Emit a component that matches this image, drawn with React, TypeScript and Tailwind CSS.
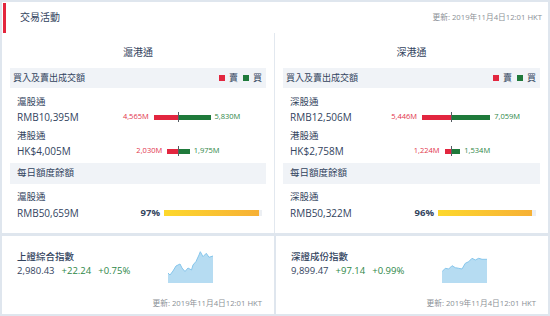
import React from 'react';

const TEXT = 'text-[#33445e]';
const STAMP = '更新: 2019年11月4日12:01 HKT';

interface Flow {
  label: string;
  value: string;
  sell: number;
  buy: number;
}

interface Market {
  title: string;
  flows: Flow[];
  quotaLabel: string;
  quotaValue: string;
  quotaPct: number;
}

const markets: Market[] = [
  {
    title: '滬港通',
    flows: [
      { label: '滬股通', value: 'RMB10,395M', sell: 4565, buy: 5830 },
      { label: '港股通', value: 'HK$4,005M', sell: 2030, buy: 1975 },
    ],
    quotaLabel: '滬股通',
    quotaValue: 'RMB50,659M',
    quotaPct: 97,
  },
  {
    title: '深港通',
    flows: [
      { label: '深股通', value: 'RMB12,506M', sell: 5446, buy: 7059 },
      { label: '港股通', value: 'HK$2,758M', sell: 1224, buy: 1534 },
    ],
    quotaLabel: '深股通',
    quotaValue: 'RMB50,322M',
    quotaPct: 96,
  },
];

const fmt = (n: number) => n.toLocaleString('en-US') + 'M';

const FlowRow = ({ flow, first }: { flow: Flow; first: boolean }) => (
  <div className={first ? 'mt-[7px]' : 'mt-[4px]'}>
    <div className={`h-[14px] pl-[15px] flex items-center text-[9.5px] ${TEXT}`}>{flow.label}</div>
    <div className="h-[16px] pl-[15px] flex items-center">
      <div className="w-[161px] flex items-center justify-between">
        <span className={`text-[10px] ${TEXT}`}>{flow.value}</span>
        <div className="flex items-center gap-[5px]">
          <span className="text-[7.5px] text-[#e2354c]">{fmt(flow.sell)}</span>
          <div className="h-[5px] bg-[#e2263f]" style={{ width: flow.sell / 188 }} />
        </div>
      </div>
      <div className="w-px h-[10px] bg-[#555b63]" />
      <div className="flex items-center gap-[4px]">
        <div className="h-[5px] bg-[#1f7a3b]" style={{ width: flow.buy / 185 }} />
        <span className="text-[7.5px] text-[#2e8747]">{fmt(flow.buy)}</span>
      </div>
    </div>
  </div>
);

const Column = ({ m, left }: { m: Market; left: boolean }) => (
  <div className={`flex flex-col ${left ? 'border-r border-[#e2e8ef]' : ''}`}>
    <div className={`h-[35px] pt-[4px] flex items-center justify-center text-[10px] ${TEXT}`}>{m.title}</div>
    <div className={`mx-[8px] h-[20px] bg-[#f0f3f7] flex items-center justify-between pl-[3px] pr-[4px] text-[9px] ${TEXT}`}>
      <span>買入及賣出成交額</span>
      <div className="flex items-center">
        <span className="w-[6px] h-[6px] bg-[#e2263f]" />
        <span className="ml-[4px]">賣</span>
        <span className="ml-[5px] w-[6px] h-[6px] bg-[#1f7a3b]" />
        <span className="ml-[4px]">買</span>
      </div>
    </div>
    {m.flows.map((f, i) => (
      <FlowRow key={f.label + i} flow={f} first={i === 0} />
    ))}
    <div className={`mt-[4px] mx-[8px] h-[21px] bg-[#f0f3f7] flex items-center pl-[7px] text-[9.5px] ${TEXT}`}>每日額度餘額</div>
    <div className="mt-[6px]">
      <div className={`h-[14px] pl-[15px] flex items-center text-[9.5px] ${TEXT}`}>{m.quotaLabel}</div>
      <div className="h-[16px] mt-[1px] pl-[15px] pr-[12px] flex items-center">
        <span className={`flex-1 text-[10px] ${TEXT}`}>{m.quotaValue}</span>
        <span className={`text-[9.5px] font-bold ${TEXT}`}>{m.quotaPct}%</span>
        <div className="ml-[4px] w-[98px] h-[6px] bg-[#eceff3]">
          <div className="h-full bg-linear-to-r from-[#fdd82c] to-[#f6b035]" style={{ width: `${m.quotaPct}%` }} />
        </div>
      </div>
    </div>
  </div>
);

const Spark = ({ pts }: { pts: string }) => (
  <svg width="46" height="32" viewBox="0 0 46 32" className="mt-[1px]">
    <polygon points={`${pts} 45,32 0,32`} fill="#b6dcf2" />
    <polyline points={pts} fill="none" stroke="#86c6ec" strokeWidth="1" />
  </svg>
);

const indices = [
  {
    name: '上證綜合指數',
    last: '2,980.43',
    chg: '+22.24',
    pct: '+0.75%',
    pts: '0,22 2,24 5,20 8,15 12,13 14,17 17,20.5 20,17 23.5,19 25,14 28,10.5 31,4 32.3,0.7 35,5.7 38.3,2.3 41,6.3 45,5',
  },
  {
    name: '深證成份指數',
    last: '9,899.47',
    chg: '+97.14',
    pct: '+0.99%',
    pts: '0,20.7 3.3,17.3 6.7,18 10,14.7 13.3,16.7 16.7,17.3 20,18 23.3,12.3 26.7,10.7 30,7.3 33.3,9 36.7,7.3 40,8.3 45,8.3',
  },
];

export default function App() {
  return (
    <div className="w-[550px] h-[316px] bg-[#dfe6ee] p-[2px] flex flex-col gap-[3px] font-['Open_Sans','Noto_Sans_CJK_TC',sans-serif]">
      {/* trading activity */}
      <div className="h-[231px] bg-white flex flex-col">
        <div className="h-[31px] flex items-center">
          <div className="self-start ml-[1px] mt-[1px] w-[3px] h-[30px] bg-[#e3263d]" />
          <span className={`ml-[14px] text-[10px] ${TEXT}`}>交易活動</span>
          <span className="ml-auto mr-[6px] text-[7.7px] text-[#8a8f96]">{STAMP}</span>
        </div>
        <div className="flex-1 grid grid-cols-2">
          {markets.map((m, i) => (
            <Column key={m.title} m={m} left={i === 0} />
          ))}
        </div>
      </div>

      {/* indices */}
      <div className="flex-1 grid grid-cols-2 gap-[2px]">
        {indices.map((x) => (
          <div key={x.name} className="bg-white flex flex-col">
            <div className="flex pl-[15px] pt-[14px]">
              <div className="w-[151px]">
                <div className={`h-[14px] flex items-center text-[9.5px] font-medium ${TEXT}`}>{x.name}</div>
                <div className="h-[14px] flex items-center gap-[7px] text-[9.5px]">
                  <span className={TEXT}>{x.last}</span>
                  <span className="text-[#2e8747]">{x.chg}</span>
                  <span className="text-[#2e8747]">{x.pct}</span>
                </div>
              </div>
              <Spark pts={x.pts} />
            </div>
            <div className="flex-1" />
            <div className="h-[12px] mb-[4px] pr-[12px] flex items-center justify-end text-[7.7px] text-[#8a8f96]">{STAMP}</div>
          </div>
        ))}
      </div>
    </div>
  );
}
